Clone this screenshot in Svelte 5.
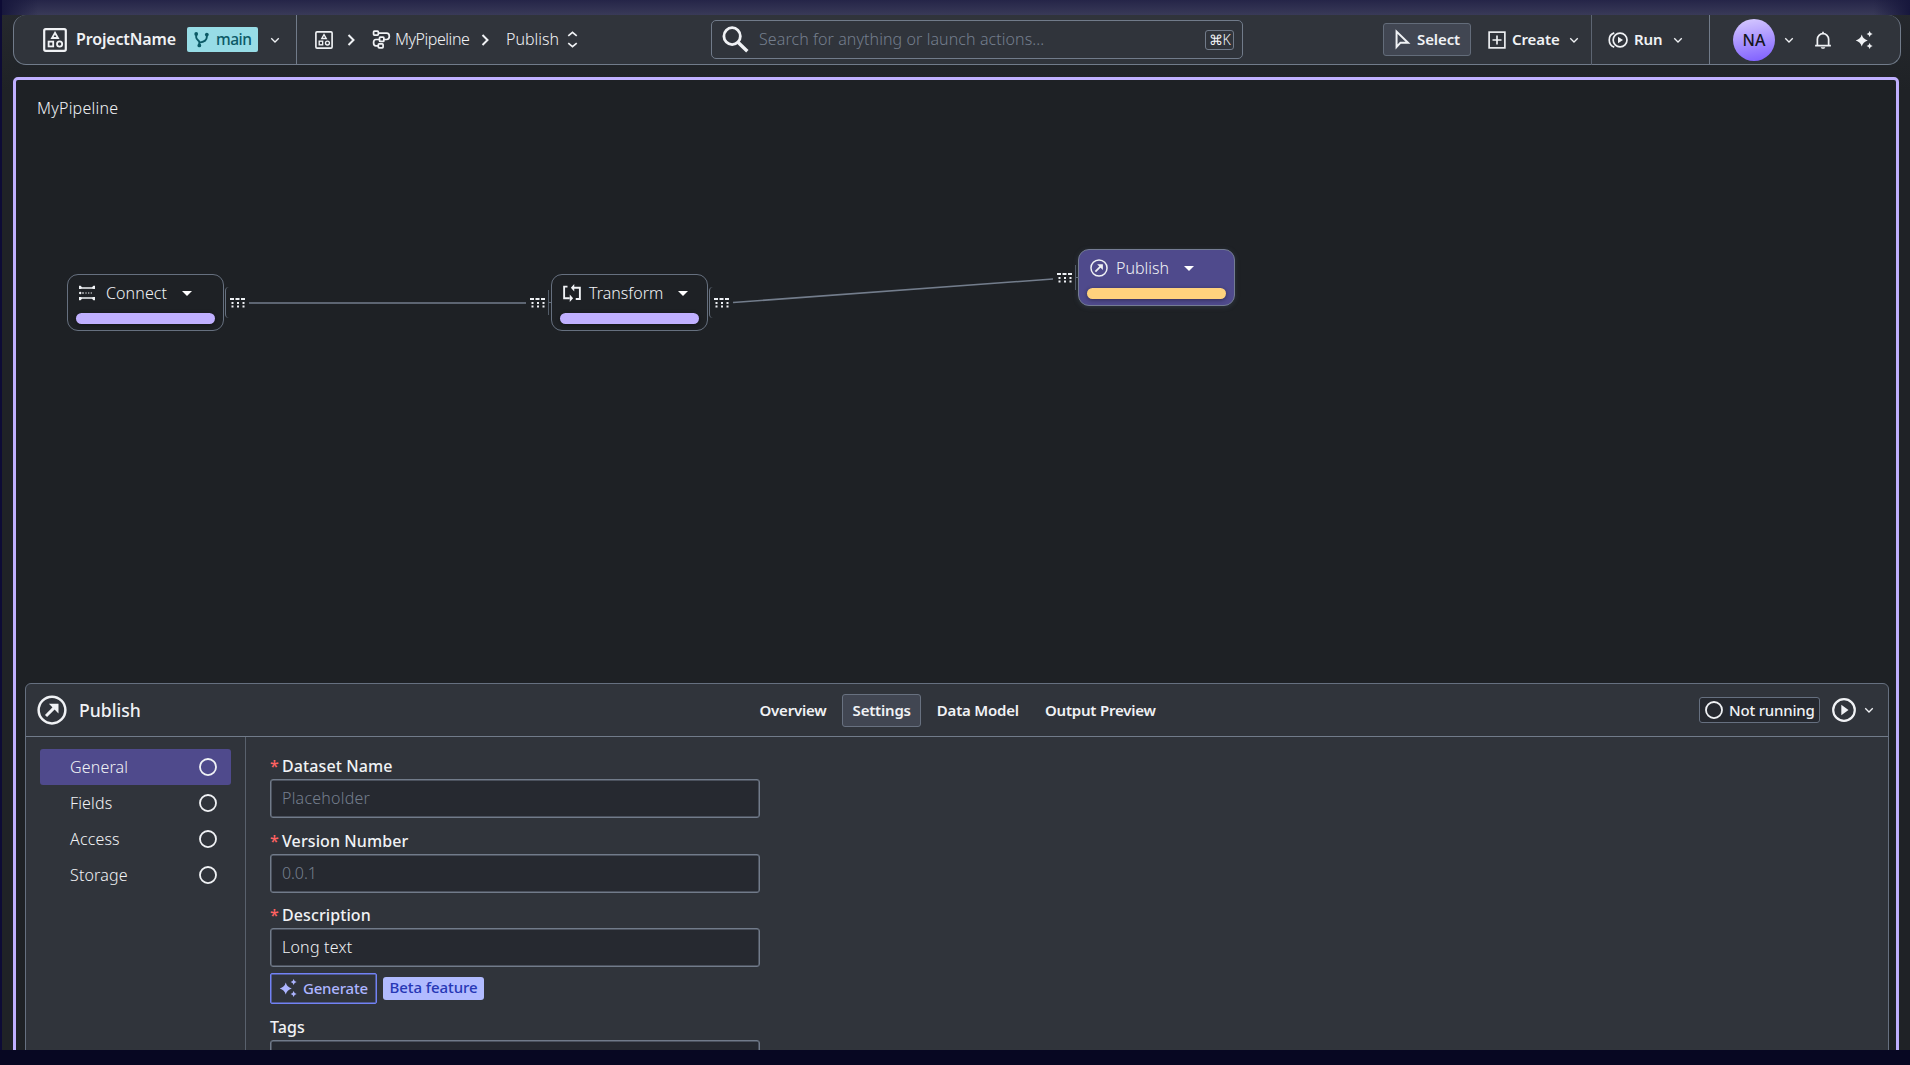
<script>
	const nodes = [
		{ id: 'connect', label: 'Connect', icon: 'connect', x: 51, y: 194, input: false, output: true },
		{ id: 'transform', label: 'Transform', icon: 'transform', x: 535, y: 194, input: true, output: true },
		{ id: 'publish', label: 'Publish', icon: 'publish', x: 1062, y: 169, input: true, output: false }
	];

	const edges = [
		{ from: [233, 223], to: [510, 223] },
		{ from: [717, 222.5], to: [1037, 199] }
	];

	const tabs = ['Overview', 'Settings', 'Data Model', 'Output Preview'];
	const sections = ['General', 'Fields', 'Access', 'Storage'];

	let selectedNode = $state('publish');
	let activeTab = $state('Settings');
	let activeSection = $state('General');
	let form = $state({ name: '', version: '', description: 'Long text', tags: '' });
</script>

{#snippet icon(name, size = 24)}
	<svg class="icon" width={size} height={size} viewBox="0 0 24 24" aria-hidden="true">
		{#if name === 'project'}
			<rect x="1.2" y="1.2" width="21.6" height="21.6" rx="1.5" stroke-width="2.2" />
			<path d="M12 4.8 15 10H9z" stroke-width="1.8" />
			<rect x="5.6" y="13.6" width="4.6" height="4.8" stroke-width="1.8" />
			<circle cx="16.6" cy="16" r="2.6" stroke-width="1.8" />
		{:else if name === 'branch'}
			<path d="M8.500 21v-5c0-2.500-5-3.500-5-7.500V4M8.500 17c8-1 12-4 12-9V5" stroke-width="3" />
			<circle class="solid" cx="3.500" cy="3" r="3" />
			<circle class="solid" cx="20.500" cy="4" r="3" />
			<circle class="solid" cx="8.500" cy="21.500" r="3" />
		{:else if name === 'down'}
			<path d="m3 8 9 9 9-9" stroke-width="3.2" />
		{:else if name === 'right'}
			<path d="m7 2 10 10L7 22" stroke-width="4" />
		{:else if name === 'updown'}
			<path d="m6 7 6-5 6 5M6 17l6 5 6-5" stroke-width="2.4" />
		{:else if name === 'pipeline'}
			<rect x="2" y="1.500" width="6" height="5" rx="1" stroke-width="2.200" />
			<rect x="9.500" y="9" width="5.500" height="5.500" rx="1" stroke-width="2.200" />
			<rect x="8" y="17.500" width="6" height="5" rx="1" stroke-width="2.200" />
			<path d="M8 4h10.500c4.500 0 4.500 8 0 8H15M9.500 12H5c-4 0-4 8 0 8h3" stroke-width="2.200" />
		{:else if name === 'search'}
			<ellipse cx="9" cy="9" rx="7.3" ry="7.5" stroke-width="2.5" />
			<path d="m14.2 14.500 8.300 8" stroke-width="3" />
		{:else if name === 'cursor'}
			<path d="M4.5 2v19.500l5-5.500H19z" stroke-width="2.500" />
		{:else if name === 'create'}
			<rect x="1.5" y="1.5" width="21" height="21" stroke-width="2.2" />
			<path d="M12 6v12M6 12h12" stroke-width="2.2" />
		{:else if name === 'run'}
			<circle cx="14.5" cy="12" r="8.3" stroke-width="2" />
			<path d="M7.5 3.5c-8 2.5-8 14.5 0 17" stroke-width="2" />
			<path class="solid" d="m12 8 6 4-6 4z" />
		{:else if name === 'bell'}
			<path d="M1.5 19.5h21M4.5 19V11a7.5 7.5 0 0 1 15 0v8M12 3.5V1" stroke-width="2.3" />
			<path class="solid" d="M9 21.5h6c-.5 3-5.5 3-6 0z" />
		{:else if name === 'sparkle'}
			<path class="solid" d="M9 4.500q1.500 6 8 8-6.500 2-8 8-1.500-6-8-8 6.500-2 8-8zM19.500 0q.7 3.200 4 4-3.300.8-4 4-.7-3.200-4-4 3.300-.8 4-4zM19.500 16q.7 3.200 4 4-3.300.8-4 4-.7-3.200-4-4 3.300-.8 4-4z" />
		{:else if name === 'connect'}
			<path class="solid" d="M0 1h2.500l2 2.200h15L21.500 1H24v5h-2.500l-2-.4h-15l-2 .4H0zM0 23h2.500l2-2.200h15l2 2.200H24v-5h-2.500l-2 .4h-15l-2-.4H0z" />
			<path d="M4.500 12h3M9.500 12h2M13.500 12h2M17.500 12h2" stroke-width="1.800" />
			<circle class="solid" cx="1.800" cy="12" r="1.800" />
		{:else if name === 'transform'}
			<path d="M6 3.5H1.500V19H9M15 5h7.500v15H17M13 5h3" stroke-width="2.5" />
			<path class="solid" d="m10.500 5 4.500-5v10zM13.500 19 9 14v10z" />
		{:else if name === 'publish'}
			<circle cx="12" cy="12" r="10.7" stroke-width="2" />
			<path d="m7.200 16.800 7.300-7.300" stroke-width="2.4" />
			<path class="solid" d="M9.500 7h7.700v7.700z" />
		{:else if name === 'play'}
			<circle cx="12" cy="12" r="10.8" stroke-width="2.2" />
			<path class="solid" d="m9.300 6.800 7.200 5.200-7.200 5.200z" />
		{:else if name === 'circle'}
			<circle cx="12" cy="12" r="10.7" stroke-width="2.4" />
		{/if}
	</svg>
{/snippet}

{#snippet port(side)}
	<span class="port {side}">
		<span class="bracket"></span>
		<svg width="15" height="10" viewBox="0 0 15 10" aria-hidden="true">
			<path d="M0 1h15" stroke-width="2" stroke-dasharray="4 1.5" />
			<path d="M1.5 5h14M1.5 8.5h14" stroke-width="2" stroke-dasharray="2 3.5" />
		</svg>
	</span>
{/snippet}

<div class="app">
	<header class="topbar">
		<div class="project">
			{@render icon('project', 24)}
			<strong class="project-name">ProjectName</strong>
			<span class="branch">{@render icon('branch', 15)}<span>main</span></span>
			{@render icon('down', 10)}
		</div>

		<nav class="crumbs">
			{@render icon('project', 18)}
			{@render icon('right', 12)}
			{@render icon('pipeline', 19)}
			<span class="crumb-pipeline">MyPipeline</span>
			{@render icon('right', 12)}
			<span class="crumb-node">Publish</span>
			{@render icon('updown', 17)}
		</nav>

		<label class="search">
			{@render icon('search', 27)}
			<input type="text" placeholder="Search for anything or launch actions..." />
			<kbd>⌘K</kbd>
		</label>

		<div class="tools">
			<button type="button" class="select">{@render icon('cursor', 19)}<span>Select</span></button>
			<button type="button" class="create">
				{@render icon('create', 18)}<span>Create</span>{@render icon('down', 10)}
			</button>
			<button type="button" class="run">
				{@render icon('run', 20)}<span>Run</span>{@render icon('down', 10)}
			</button>
		</div>

		<div class="account">
			<span class="avatar">NA</span>
			{@render icon('down', 10)}
			{@render icon('bell', 18)}
			{@render icon('sparkle', 18)}
		</div>
	</header>

	<main class="workspace">
		<section class="canvas">
			<h1>MyPipeline</h1>
			<svg class="edges" width="1880" height="603">
				{#each edges as edge}
					<line x1={edge.from[0]} y1={edge.from[1]} x2={edge.to[0]} y2={edge.to[1]} />
				{/each}
			</svg>
			{#each nodes as node (node.id)}
				<div
					class="node"
					class:selected={selectedNode === node.id}
					style="left: {node.x}px; top: {node.y}px"
				>
					{#if node.input}{@render port('in')}{/if}
					<button type="button" class="node-title" onclick={() => (selectedNode = node.id)}>
						{@render icon(node.icon, node.icon === 'connect' ? 16 : 18)}
						<span class={node.id}>{node.label}</span>
						<i class="caret"></i>
					</button>
					<div class="status"></div>
					{#if node.output}{@render port('out')}{/if}
				</div>
			{/each}
		</section>

		<section class="panel">
			<div class="panel-head">
				<div class="panel-title">{@render icon('publish', 30)}<h2>Publish</h2></div>
				<div class="tabs">
					{#each tabs as tab}
						<button type="button" class:active={activeTab === tab} onclick={() => (activeTab = tab)}>
							{tab}
						</button>
					{/each}
				</div>
				<div class="run-state">
					<span class="state">{@render icon('circle', 18)}<span>Not running</span></span>
					{@render icon('play', 24)}
					{@render icon('down', 10)}
				</div>
			</div>

			<div class="panel-body">
				<aside>
					{#each sections as section}
						<button
							type="button"
							class:active={activeSection === section}
							onclick={() => (activeSection = section)}
						>
							<span>{section}</span>
							{@render icon('circle', 18)}
						</button>
					{/each}
				</aside>

				<form>
					<label class="field">
						<span class="label"><b>*</b><span>Dataset Name</span></span>
						<input type="text" placeholder="Placeholder" bind:value={form.name} />
					</label>
					<label class="field">
						<span class="label"><b>*</b><span>Version Number</span></span>
						<input class="tight" type="text" placeholder="0.0.1" bind:value={form.version} />
					</label>
					<label class="field">
						<span class="label"><b>*</b><span>Description</span></span>
						<input type="text" bind:value={form.description} />
					</label>
					<div class="assist">
						<button type="button">{@render icon('sparkle', 18)}<span>Generate</span></button>
						<span class="beta">Beta feature</span>
					</div>
					<label class="field">
						<span class="label">Tags</span>
						<input type="text" bind:value={form.tags} />
					</label>
				</form>
			</div>
		</section>
	</main>
</div>

<style>
	:global(body) {
		background: #070722;
		overflow: hidden;
	}

	.app {
		--line: #717b8a;
		--text: #f0f2f5;
		--accent: #c0b0ff;
		box-sizing: border-box;
		height: 1050px;
		padding: 15px 9px 0 11px;
		border-left: 2px solid #0d0b35;
		background:
			linear-gradient(90deg, #17173c, transparent 36px, transparent 1872px, #17173c) 0 0 / 100% 15px no-repeat,
			linear-gradient(#252548, #393a58) 0 0 / 100% 15px no-repeat,
			linear-gradient(#26292e, #1f2226 90px) #1f2226;
		overflow: hidden;
		color: var(--text);
		font-family: 'Noto Sans', 'Open Sans', sans-serif;
		font-size: 16px;
		line-height: 20px;
	}

	.app :global(*) {
		box-sizing: border-box;
	}

	button,
	input {
		font: inherit;
		color: inherit;
		letter-spacing: inherit;
		background: none;
		border: 0;
		padding: 0;
		text-align: left;
		white-space: nowrap;
	}

	span,
	strong {
		white-space: nowrap;
	}

	.icon {
		display: block;
		flex: none;
		fill: none;
		stroke: currentColor;
		overflow: visible;
	}

	.icon .solid {
		fill: currentColor;
		stroke: none;
	}

	/* top bar */
	.topbar {
		display: flex;
		align-items: stretch;
		height: 50px;
		border: 1px solid var(--line);
		border-top: 0;
		border-radius: 13px;
		background: #30343b;
	}

	.topbar strong,
	.topbar nav > span,
	.branch > span,
	.tools span {
		padding-bottom: 2px;
	}

	.project {
		display: grid;
		grid-template-columns: 33px 111px 83px 10px;
		align-items: center;
		width: 283px;
		padding-left: 29px;
		border-right: 1px solid var(--line);
	}

	.project-name {
		font-weight: 600;
		letter-spacing: -0.15px;
	}

	.branch {
		display: flex;
		align-items: center;
		gap: 7px;
		width: 71px;
		height: 25px;
		padding-left: 7px;
		border-radius: 2px;
		background: #97dce6;
		color: #0c5a66;
		font-size: 15.5px;
		font-weight: 500;
		letter-spacing: -0.5px;
	}

	.crumbs {
		display: grid;
		grid-template-columns: 30px 27px 23px 84px 27px 58px 18px;
		align-items: center;
		padding-left: 18px;
		width: 414px;
		font-weight: 300;
	}

	.crumb-pipeline {
		letter-spacing: -0.45px;
	}

	.search {
		display: flex;
		align-items: center;
		align-self: center;
		width: 532px;
		height: 39px;
		padding: 0 8px 0 10px;
		border: 1px solid var(--line);
		border-radius: 5px;
		font-weight: 300;
		letter-spacing: 0.08px;
	}

	.search input {
		flex: 1;
		margin-left: 10px;
		padding-bottom: 2px;
		outline: none;
	}

	input::placeholder {
		color: #747e8d;
		opacity: 1;
	}

	kbd {
		width: 29px;
		height: 20px;
		border: 1px solid var(--line);
		border-radius: 3px;
		font-family: 'Noto Sans', 'DejaVu Sans', sans-serif;
		font-size: 14px;
		line-height: 17px;
		text-align: center;
		letter-spacing: -1px;
	}

	.tools {
		display: flex;
		align-items: center;
		width: 467px;
		padding-left: 140px;
		border-right: 1px solid var(--line);
		font-weight: 600;
		font-size: 15px;
		letter-spacing: -0.1px;
	}

	.select {
		display: flex;
		align-items: center;
		gap: 5px;
		width: 88px;
		height: 33px;
		padding-left: 9px;
		border: 1px solid #636c7a;
		border-radius: 3px;
		background: #414652;
	}

	.create {
		display: grid;
		grid-template-columns: 24px 57px 10px;
		align-items: center;
		height: 50px;
		width: 121px;
		padding-left: 17px;
		border-right: 1px solid #5d6572;
	}

	.run {
		display: grid;
		grid-template-columns: 26px 39px 10px;
		align-items: center;
		padding-left: 16px;
	}

	.account {
		display: grid;
		grid-template-columns: 51px 30px 41px 18px;
		align-items: center;
		padding-left: 23px;
	}

	.avatar {
		width: 42px;
		height: 42px;
		border-radius: 50%;
		background: linear-gradient(170deg, #d8ccff, #7c5cff);
		color: #15161c;
		font-weight: 500;
		line-height: 42px;
		text-align: center;
	}

	/* workspace */
	.workspace {
		display: flex;
		flex-direction: column;
		width: 1886px;
		height: 990px;
		margin-top: 12px;
		border: 3px solid var(--accent);
		border-radius: 5px;
		background: #1e2125;
	}

	.canvas {
		position: relative;
		flex: none;
		height: 603px;
	}

	h1 {
		margin: 0;
		padding: 17px 0 0 21px;
		font-weight: 300;
		font-size: 16px;
		line-height: 22px;
		letter-spacing: 0.25px;
	}

	.edges {
		position: absolute;
		inset: 0;
	}

	.edges line {
		stroke: #737d8c;
		stroke-width: 1.6;
	}

	.node {
		position: absolute;
		width: 157px;
		height: 57px;
		padding: 8px 8px 0;
		border: 1px solid #66707f;
		border-radius: 11px;
	}

	.node-title {
		display: flex;
		align-items: center;
		gap: 8px;
		height: 20px;
		padding-left: 3px;
	}

	.node-title span {
		font-weight: 300;
	}

	.node-title .connect {
		margin-left: 3px;
		letter-spacing: 0.1px;
	}

	.caret {
		margin-left: 7px;
		border: 5px solid transparent;
		border-top-color: #fff;
		border-bottom: 0;
	}

	.status {
		width: 139px;
		height: 10.5px;
		margin-top: 10px;
		border-radius: 6px;
		background: var(--accent);
		box-shadow: 0 1px 4px #0006;
	}

	.selected {
		background: #4f4a8c;
		border-color: #747c93;
		box-shadow: 0 1px 5px #4a5a6a66;
	}

	.selected .status {
		background: #ffd27d;
	}

	.port {
		position: absolute;
		top: 12px;
		display: flex;
		align-items: center;
		height: 31px;
	}

	.port.out {
		left: 156.5px;
		gap: 1px;
	}

	.port.in {
		right: 156px;
		flex-direction: row-reverse;
		gap: 3px;
	}

	.port svg {
		stroke: #edf0f4;
		fill: none;
	}

	.bracket {
		position: relative;
		width: 4px;
		height: 31px;
		border-left: 1px solid #66707f;
		border-radius: 5px 0 0 5px;
	}

	.in .bracket {
		height: 25px;
		width: 3px;
		border-color: #535c68;
		border-radius: 0;
	}

	.in .bracket::after {
		content: '';
		position: absolute;
		left: 0;
		top: 12px;
		width: 3px;
		height: 1px;
		background: #66707f;
	}

	/* details panel */
	.panel {
		width: 1864px;
		height: 390px;
		margin-left: 9px;
		border: 1px solid #667080;
		border-radius: 6px 6px 0 0;
		background: #30343b;
	}

	.panel-head {
		display: grid;
		grid-template-columns: 723px 949px 1fr;
		align-items: center;
		height: 53px;
		border-bottom: 1px solid var(--line);
	}

	.panel-title {
		display: flex;
		align-items: center;
		gap: 12px;
		padding-left: 11px;
	}

	h2 {
		margin: 0;
		font-size: 17.6px;
		font-weight: 500;
	}

	.tabs {
		display: flex;
		font-size: 15px;
		font-weight: 600;
		letter-spacing: -0.2px;
	}

	.tabs button {
		height: 33px;
		margin-right: 5px;
		padding: 0 9.5px 1px;
		border: 1px solid transparent;
		border-radius: 3px;
	}

	.tabs .active {
		border-color: #687180;
		background: #414652;
	}

	.run-state {
		display: flex;
		align-items: center;
		padding-left: 1px;
	}

	.state {
		display: flex;
		align-items: center;
		gap: 6px;
		width: 121px;
		height: 26px;
		margin-right: 12px;
		padding-left: 5px;
		border: 1px solid #667080;
		border-radius: 3px;
		background: #262930;
		font-size: 15px;
		font-weight: 500;
		letter-spacing: -0.2px;
	}

	.run-state > :global(svg:last-child) {
		margin-left: 8px;
	}

	.panel-body {
		display: grid;
		grid-template-columns: 220px 1fr;
		height: 335px;
	}

	aside {
		padding: 12px 14px;
		border-right: 1px solid #59616d;
	}

	aside button {
		display: flex;
		align-items: center;
		justify-content: space-between;
		width: 191px;
		height: 35.9px;
		padding: 0 14.5px 0 30px;
		border-radius: 3px;
		font-weight: 300;
		letter-spacing: 0.15px;
	}

	aside .active {
		background: #4f4a8c;
	}

	form {
		width: 514px;
		padding: 18px 0 0 24px;
	}

	.field {
		display: block;
		height: 74.5px;
	}

	.label {
		display: flex;
		gap: 4px;
		height: 24px;
		line-height: 22px;
		font-weight: 500;
		letter-spacing: 0.1px;
	}

	.label b {
		width: 8px;
		color: #ff6262;
		font-weight: 500;
	}

	.field input {
		display: block;
		width: 490px;
		height: 39px;
		padding: 0 11px 1px;
		border: 1px solid var(--line);
		border-radius: 3px;
		background: #262930;
		box-shadow: inset 0 0 0 0.5px var(--line);
		font-weight: 300;
		letter-spacing: 0.22px;
	}

	.field input.tight {
		letter-spacing: -0.1px;
	}

	.assist {
		display: flex;
		align-items: center;
		gap: 6px;
		height: 31px;
		margin: -5.5px 0 12px;
		font-size: 15px;
		font-weight: 500;
		letter-spacing: -0.2px;
	}

	.assist button {
		display: flex;
		align-items: center;
		gap: 6px;
		width: 107px;
		height: 31px;
		padding: 0 0 1px 8px;
		border: 1px solid #7282f5;
		border-radius: 2px;
		box-shadow: inset 0 0 0 0.5px #7282f5;
		color: #adb5ff;
	}

	.beta {
		width: 101px;
		height: 23px;
		border-radius: 3px;
		background: #b1bbff;
		color: #2637b5;
		letter-spacing: -0.1px;
		line-height: 21px;
		text-align: center;
	}
</style>
